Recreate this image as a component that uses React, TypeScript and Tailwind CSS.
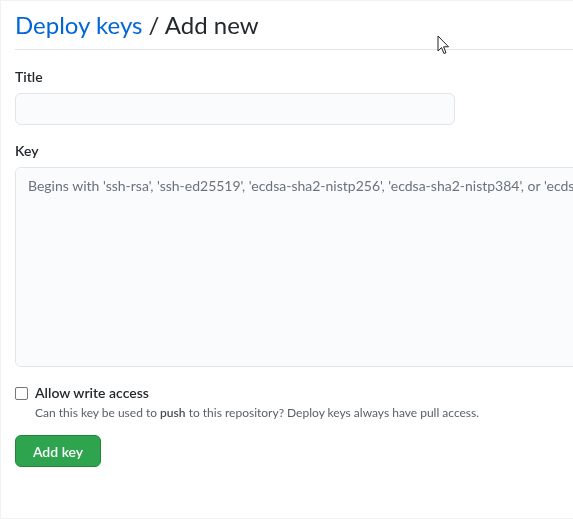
import React from "react";

export default function App() {
  const font = { fontFamily: 'Lato, "Noto Sans", sans-serif' };
  return (
    <div
      className="relative w-[573px] h-[519px] overflow-hidden bg-white border-t border-l border-b border-[#f2f2f2] text-[#24292e]"
      style={font}
    >
      <div className="pl-[14px]">
        <div className="pt-[8px] pb-[8px] border-b border-[#e1e4e8]">
          <h2 className="text-[24px] leading-[32px] font-normal">
            <a className="text-[#0366d6]">Deploy keys</a> / Add new
          </h2>
        </div>
        <div className="mt-[17px]">
          <label className="block text-[14px] font-semibold leading-[20px]">Title</label>
          <input
            className="mt-[6px] block w-[440px] h-[32px] rounded-[6px] border border-[#e1e4e8] bg-[#fafbfc] px-3 text-[14px] outline-none"
          />
        </div>
        <div className="mt-[16px]">
          <label className="block text-[14px] font-semibold leading-[20px]">Key</label>
          <textarea
            className="mt-[6px] block w-[640px] h-[200px] rounded-[6px] border border-[#e1e4e8] bg-[#fafbfc] px-[12px] pt-[8px] text-[14px] leading-[20px] outline-none resize-none placeholder:text-[#6a737d] whitespace-nowrap"
            placeholder="Begins with 'ssh-rsa', 'ssh-ed25519', 'ecdsa-sha2-nistp256', 'ecdsa-sha2-nistp384', or 'ecdsa-sha2-nistp521'"
            wrap="off"
          />
        </div>
        <div className="mt-[17px] flex items-start gap-[7px]">
          <input type="checkbox" className="mt-[3px] w-[13px] h-[13px] appearance-none border border-[#767676] rounded-[2px] bg-white" />
          <div>
            <div className="text-[14px] font-semibold leading-[18px]">Allow write access</div>
            <div className="text-[12px] leading-[18px] text-[#586069] mt-[2px]">
              Can this key be used to <strong className="font-semibold text-[#444d56]">push</strong> to this repository? Deploy keys always have pull access.
            </div>
          </div>
        </div>
        <button className="mt-[13px] h-[32px] w-[86px] rounded-[6px] bg-[#2ea44f] border border-[#22863a] text-white text-[14px] font-semibold">
          Add key
        </button>
      </div>
      <svg className="absolute left-[436px] top-[34px]" width="13" height="20" viewBox="0 0 13 20">
        <path d="M1 1 L1 16 L4.5 12.5 L7 18.5 L9 17.7 L6.6 11.8 L11.5 11.8 Z" fill="white" stroke="#222" strokeWidth="1" strokeLinejoin="round" />
      </svg>
    </div>
  );
}
